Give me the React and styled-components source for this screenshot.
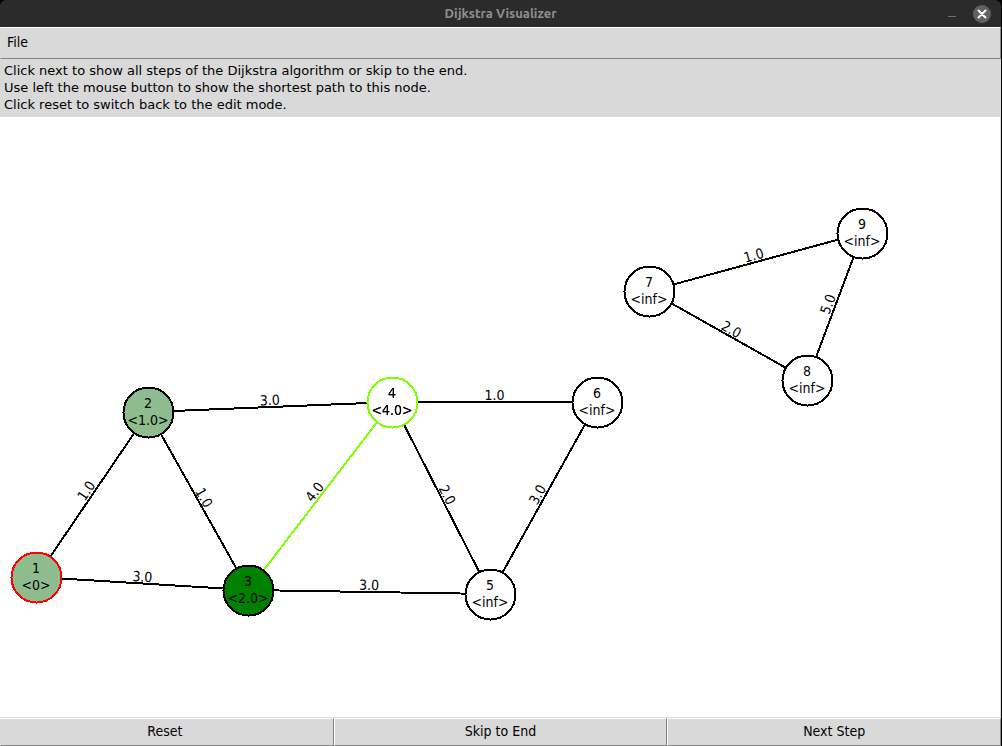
import React from "react";
import styled, { createGlobalStyle } from "styled-components";

const GlobalStyle = createGlobalStyle`
  * { box-sizing: border-box; }
  body {
    margin: 0;
    background: #000;
    color: #000;
    font: 14px/17px "DejaVu Sans Condensed", "DejaVu Sans", sans-serif;
  }
`;

const Window = styled.div`
  min-height: 100vh;
  margin-right: 1px;
  display: flex;
  flex-direction: column;
`;

const TitleBar = styled.header`
  display: grid;
  grid-template-columns: 1fr auto 1fr;
  align-items: center;
  height: 27px;
  padding: 0 10px;
  background: #2b2b2b;
  border-radius: 6px 6px 0 0;
`;

const Title = styled.h1`
  grid-column: 2;
  margin: 0;
  padding-bottom: 2px;
  color: #8f8f8f;
  font: 600 13px/18px Ubuntu, "Noto Sans", sans-serif;
`;

const WindowControls = styled.div`
  display: flex;
  justify-content: flex-end;
  gap: 12px;
`;

const ControlButton = styled.button`
  display: flex;
  padding: 0;
  border: 0;
  border-radius: 50%;
  background: ${(p) => (p.$filled ? "#616161" : "transparent")};
  color: ${(p) => (p.$filled ? "#fff" : "#6c6c6c")};
`;

const MenuBar = styled.nav`
  display: flex;
  align-items: center;
  height: 32px;
  padding: 0 6px 2px;
  background: #d9d9d9;
  border: 1px solid #828282;
  border-top-color: #fff;
  border-left-color: #d9d9d9;
`;

const MenuButton = styled.button`
  padding: 0;
  border: 0;
  background: none;
  color: inherit;
  font: inherit;
`;

const Help = styled.p`
  margin: 0;
  padding: 3px 4px 4px;
  background: #d9d9d9;
  font: 13px/17px "DejaVu Sans", sans-serif;
  white-space: pre-line;
`;

const Canvas = styled.main`
  flex: 1;
  background: #fff;
  border-right: 1px solid #d9d9d9;
  border-bottom: 1px solid #d9d9d9;
  overflow: hidden;
`;

const Graph = styled.svg`
  display: block;
  overflow: visible;
`;

const EdgeLine = styled.line`
  stroke: ${(p) => p.$color};
  stroke-width: 2px;
  shape-rendering: crispEdges;
`;

const NodeCircle = styled.circle`
  fill: ${(p) => p.$fill};
  stroke: ${(p) => p.$stroke};
  stroke-width: 2px;
  shape-rendering: crispEdges;
`;

const Label = styled.text`
  text-anchor: middle;
  filter: ${(p) => (p.$strong ? "drop-shadow(0 0 0 #000)" : "none")};
`;

const Actions = styled.footer`
  display: grid;
  grid-template-columns: repeat(3, 1fr);
`;

const ActionButton = styled.button`
  height: 28px;
  padding: 0 4px 2px;
  background: #d9d9d9;
  border: 1px solid #828282;
  border-top-color: #fff;
  border-left-color: #fff;
  color: inherit;
  font: inherit;

  &:first-child {
    border-left-color: #d9d9d9;
    padding-right: 8px;
  }
`;

const RADIUS = 25;
const PIXEL_CENTER = 0.5;

const nodes = {
  1: { x: 36, y: 460, cost: "0", fill: "#8fbc8f", stroke: "#f00" },
  2: { x: 148, y: 295, cost: "1.0", fill: "#8fbc8f" },
  3: { x: 248, y: 473, cost: "2.0", fill: "#008000" },
  4: { x: 392, y: 285, cost: "4.0", stroke: "#7fff00", strong: true },
  5: { x: 490, y: 477, cost: "inf" },
  6: { x: 597, y: 285, cost: "inf" },
  7: { x: 649, y: 174, cost: "inf" },
  8: { x: 807, y: 263, cost: "inf" },
  9: { x: 862, y: 116, cost: "inf" },
};

// Each edge runs left to right, so its weight always reads upright.
const edges = [
  { from: 1, to: 2, weight: "1.0" },
  { from: 1, to: 3, weight: "3.0" },
  { from: 2, to: 3, weight: "1.0" },
  { from: 2, to: 4, weight: "3.0" },
  { from: 3, to: 4, weight: "4.0", color: "#7fff00" },
  { from: 3, to: 5, weight: "3.0" },
  { from: 4, to: 5, weight: "2.0" },
  { from: 4, to: 6, weight: "1.0" },
  { from: 5, to: 6, weight: "3.0" },
  { from: 7, to: 8, weight: "2.0" },
  { from: 7, to: 9, weight: "1.0" },
  { from: 8, to: 9, weight: "5.0" },
];

function Edge({ from, to, weight, color = "#000" }) {
  const a = nodes[from];
  const b = nodes[to];
  const angle = (Math.atan2(b.y - a.y, b.x - a.x) * 180) / Math.PI;
  const middle = `translate(${(a.x + b.x) / 2} ${(a.y + b.y) / 2})`;
  return (
    <g>
      <EdgeLine
        $color={color}
        x1={a.x + PIXEL_CENTER}
        y1={a.y}
        x2={b.x + PIXEL_CENTER}
        y2={b.y}
      />
      <Label transform={`${middle} rotate(${angle})`} y={-2}>
        {weight}
      </Label>
    </g>
  );
}

function Node({ id, x, y, cost, fill = "#fff", stroke = "#000", strong }) {
  return (
    <g>
      <NodeCircle
        $fill={fill}
        $stroke={stroke}
        cx={x + PIXEL_CENTER}
        cy={y + PIXEL_CENTER}
        r={RADIUS}
      />
      <Label $strong={strong} x={x} y={y - 4}>
        {id}
      </Label>
      <Label $strong={strong} x={x} y={y + 13}>
        {`<${cost}>`}
      </Label>
    </g>
  );
}

export default function App() {
  return (
    <>
      <GlobalStyle />
      <Window>
        <TitleBar>
          <span />
          <Title>Dijkstra Visualizer</Title>
          <WindowControls>
            <ControlButton aria-label="Minimize">
              <svg width="18" height="18" viewBox="0 0 18 18" shapeRendering="crispEdges">
                <path d="M5 11.5h8" stroke="currentColor" />
              </svg>
            </ControlButton>
            <ControlButton $filled aria-label="Close">
              <svg width="18" height="18" viewBox="0 0 18 18">
                <path d="M5.5 5.5l7 7M12.5 5.5l-7 7" stroke="currentColor" strokeWidth="2" strokeLinecap="round" />
              </svg>
            </ControlButton>
          </WindowControls>
        </TitleBar>
        <MenuBar>
          <MenuButton>File</MenuButton>
        </MenuBar>
        <Help>
          {"Click next to show all steps of the Dijkstra algorithm or skip to the end.\nUse left the mouse button to show the shortest path to this node.\nClick reset to switch back to the edit mode."}
        </Help>
        <Canvas>
          <Graph width="900" height="520" role="img" aria-label="Weighted graph">
            {edges.map((edge) => (
              <Edge key={`${edge.from}-${edge.to}`} {...edge} />
            ))}
            {Object.entries(nodes).map(([id, node]) => (
              <Node key={id} id={id} {...node} />
            ))}
          </Graph>
        </Canvas>
        <Actions>
          <ActionButton>Reset</ActionButton>
          <ActionButton>Skip to End</ActionButton>
          <ActionButton>Next Step</ActionButton>
        </Actions>
      </Window>
    </>
  );
}
